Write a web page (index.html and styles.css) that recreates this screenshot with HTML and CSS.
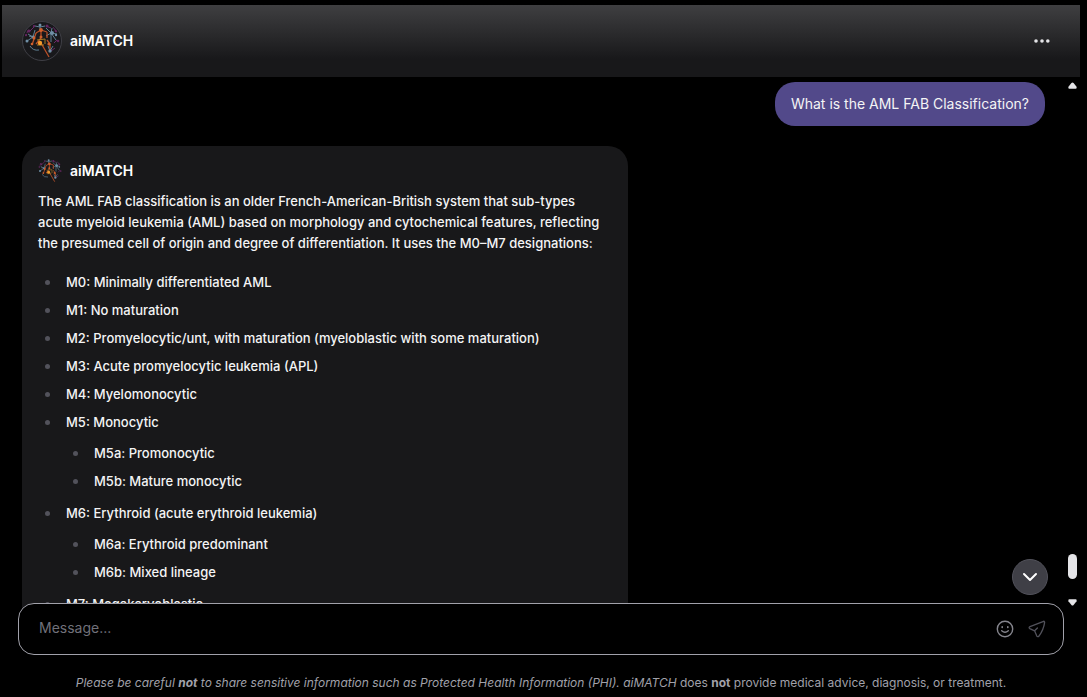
FILE: index.html
```
<!DOCTYPE html>
<html lang="en">
<head>
    <meta charset="UTF-8">
    <meta name="viewport" content="width=device-width, initial-scale=1.0">
    <title>aiMATCH</title>
    <link rel="stylesheet" href="styles.css">
</head>
<body>
    <!-- Logo shared by the header and the messages -->
    <svg class="sprite" aria-hidden="true">
        <symbol id="logo" viewBox="2 3 36 36">
            <g fill="none" stroke="#5f7f94" stroke-width="1">
                <path d="M18 10V5M18 7l-5-1M18 7l5-1M11 17L6 14M11 17l-6 4M11 17l2-7M11 17l-4-1M29 13l-5-5M29 13l6 1M29 13l5 7M29 13l-5 3M29 13l1-5M29 13v9M8 26q3 5 9 4M28 31l-2-5M28 31l3-5"/>
            </g>
            <g fill="none" stroke="#6a2a68" stroke-width="1">
                <path d="M8 11l4-4M24 6l5 2M31 7l3 4M35 20l-3 3M6 9l-1 4M33 28l-4 3"/>
            </g>
            <g fill="none" stroke="#b84f28" stroke-width="1.3">
                <path d="M19 10v8M19 10l-5 3M19 10l6 2M14 13l-2 6M12 19l-2 6M19 18l-5 6M25 12v6M28 24v6M28 24l-3-4M19 23l8 14"/>
            </g>
            <path d="M15 20l8-1M23 19v5M15 25h7" fill="none" stroke="#a87c26"/>
            <g fill="#6f8fa6">
                <circle cx="18" cy="5" r="1.5"/><circle cx="11" cy="17" r="1.5"/><circle cx="5" cy="21" r="1.5"/>
                <circle cx="30" cy="13" r="2"/><circle cx="34" cy="15" r="1.2"/><circle cx="28" cy="31" r="1.7"/>
            </g>
            <g fill="#64265f">
                <circle cx="7" cy="11" r="1.5"/><circle cx="25" cy="6" r="1.5"/><circle cx="34" cy="11" r="1.4"/>
                <circle cx="36" cy="21" r="1.3"/><circle cx="4" cy="15" r="1.2"/><circle cx="12" cy="6" r="1.2"/>
            </g>
            <g fill="#d0602c">
                <circle cx="19" cy="10" r="1.9"/><circle cx="12" cy="18" r="1.5"/><circle cx="19" cy="17" r="1.5"/>
                <circle cx="27" cy="24" r="1.6"/><circle cx="10" cy="24" r="1.3"/>
            </g>
            <circle cx="18" cy="23" r="2.2" fill="#f59a2a"/>
        </symbol>
    </svg>

    <div class="app">
        <header class="header">
            <svg class="avatar" aria-hidden="true"><use href="#logo"/></svg>
            <h1 class="name">aiMATCH</h1>
            <button class="icon-button menu" aria-label="Menu">
                <svg width="20" height="20" viewBox="0 0 20 20" fill="currentColor">
                    <circle cx="4" cy="10" r="1.8"/><circle cx="10" cy="10" r="1.8"/><circle cx="15.800" cy="10" r="1.8"/>
                </svg>
            </button>
        </header>

        <main class="chat">
            <div class="messages">
                <div class="message-user">What is the AML FAB Classification?</div>

                <article class="message-bot">
                    <div class="author">
                        <svg class="avatar-small" aria-hidden="true"><use href="#logo"/></svg>
                        <span class="name">aiMATCH</span>
                    </div>
                    <p>The AML FAB classification is an older French-American-British system that sub-types acute myeloid leukemia (AML) based on morphology and cytochemical features, reflecting the presumed cell of origin and degree of differentiation. It uses the M0–M7 designations:</p>
                    <ul>
                        <li>M0: Minimally differentiated AML</li>
                        <li>M1: No maturation</li>
                        <li>M2: Promyelocytic/unt, with maturation (myeloblastic with some maturation)</li>
                        <li>M3: Acute promyelocytic leukemia (APL)</li>
                        <li>M4: Myelomonocytic</li>
                        <li>M5: Monocytic
                            <ul>
                                <li>M5a: Promonocytic</li>
                                <li>M5b: Mature monocytic</li>
                            </ul>
                        </li>
                        <li>M6: Erythroid (acute erythroid leukemia)
                            <ul>
                                <li>M6a: Erythroid predominant</li>
                                <li>M6b: Mixed lineage</li>
                            </ul>
                        </li>
                        <li>M7: Megakaryoblastic</li>
                    </ul>
                </article>
            </div>

            <div class="scrollbar" aria-hidden="true">
                <svg width="9" height="7" viewBox="0 0 10 7"><path d="M3.8.7Q5-.6 6.2.7L9.5 5Q10 7 8.500 7h-7Q0 7 .5 5z"/></svg>
                <span class="thumb"></span>
                <svg width="9" height="7" viewBox="0 0 10 7"><path d="M3.800 6.300Q5 7.600 6.200 6.300L9.500 2Q10 0 8.500 0h-7Q0 0 .5 2z"/></svg>
            </div>

            <button class="scroll-down" aria-label="Scroll to bottom">
                <svg width="16" height="16" viewBox="0 0 16 16" fill="none" stroke="currentColor" stroke-width="2" stroke-linecap="round" stroke-linejoin="round">
                    <path d="M2 5l6 6 6-6"/>
                </svg>
            </button>
        </main>

        <form class="composer">
            <input type="text" class="composer-input" placeholder="Message..." aria-label="Message">
            <button type="button" class="icon-button emoji" aria-label="Emoji">
                <svg width="20" height="20" viewBox="0 0 20 20" fill="none" stroke="currentColor" stroke-width="1.4" stroke-linecap="round">
                    <circle cx="10" cy="10" r="7.700"/>
                    <path d="M7.200 7.800v.7M12.800 7.800v.7" stroke-width="1.600"/>
                    <path d="M6.700 11.800q3.300 2.800 6.600 0"/>
                </svg>
            </button>
            <button type="submit" class="icon-button send" aria-label="Send">
                <svg width="20" height="20" viewBox="0 0 20 20" fill="none" stroke="currentColor" stroke-width="1.300" stroke-linecap="round" stroke-linejoin="round">
                    <path d="M16.600 2.300L3 7.600Q1.300 8.600 2.800 9.600L7.600 11.800 9.700 16.800Q10.700 18.400 12 17Q16.500 11 17.600 3.600Q17.600 2.100 16.600 2.300zM7.600 11.800L10.400 9"/>
                </svg>
            </button>
        </form>

        <footer class="notice"><em>Please be careful <strong>not</strong> to share sensitive information such as Protected Health Information (PHI). aiMATCH</em> does <strong>not</strong> provide medical advice, diagnosis, or treatment.</footer>
    </div>
</body>
</html>
```

FILE: styles.css
```
* {
    box-sizing: border-box;
}

body {
    margin: 0;
    background: #000;
    color: #f4f4f5;
    font-family: Inter, "Liberation Sans", sans-serif;
    font-size: 14px;
    line-height: 21px;
}

.sprite {
    position: absolute;
    width: 0;
    height: 0;
}

.app {
    display: flex;
    flex-direction: column;
    height: 100vh;
    padding: 5px 7px 4px 2px;
}

/* Header */
.header {
    display: flex;
    flex-shrink: 0;
    align-items: center;
    gap: 8px;
    height: 72px;
    padding: 0 28px 0 20px;
    background: linear-gradient(#3f3f41, #18181a 75%);
}

.avatar {
    width: 40px;
    height: 40px;
    padding: 1px;
    border: 1px solid #3f3f46;
    border-radius: 50%;
    background: #18181b;
}

.name {
    margin: 0;
    color: #fff;
    font-size: 14px;
    font-weight: 600;
    line-height: 22px;
}

.icon-button {
    display: flex;
    padding: 0;
    border: none;
    background: none;
    cursor: pointer;
}

.menu {
    margin-left: auto;
    color: #e4e4e7;
}

/* Conversation */
.chat {
    position: relative;
    display: flex;
    flex: 1;
    min-height: 0;
    overflow: hidden;
}

.messages {
    display: flex;
    flex: 1;
    flex-direction: column;
    gap: 20px;
    padding: 5px 20px 0;
}

.message-user {
    align-self: flex-end;
    flex-shrink: 0;
    padding: 11px 16px 12px;
    border-radius: 20px;
    background: #52498a;
}

.message-bot {
    align-self: flex-start;
    flex-shrink: 0;
    max-width: 606px;
    padding: 13px 16px;
    border-radius: 20px;
    background: #18181a;
    font-size: 13px;
    font-weight: 500;
}

.author {
    display: flex;
    align-items: center;
    gap: 8px;
    margin-bottom: 8px;
}

.avatar-small {
    width: 24px;
    height: 24px;
}

.message-bot p {
    margin: 0 0 16px;
}

.message-bot ul {
    margin: 0;
    padding: 0;
    list-style: none;
    line-height: 24px;
}

.message-bot li {
    position: relative;
    padding-left: 28px;
}

.message-bot li + li {
    margin-top: 4px;
}

.message-bot li::before {
    content: "";
    position: absolute;
    top: 10px;
    left: 7px;
    width: 5px;
    height: 5px;
    border-radius: 50%;
    background: #52525b;
}

.message-bot li ul {
    margin: 7px 0 8px;
}

.scrollbar {
    display: flex;
    flex-direction: column;
    align-items: center;
    width: 15px;
    padding: 5px 0 3px;
    fill: #e4e4e7;
}

.thumb {
    width: 9px;
    height: 25px;
    margin: auto 0 20px;
    border-radius: 5px;
    background: #e4e4e7;
}

.scroll-down {
    position: absolute;
    right: 32px;
    bottom: 14px;
    display: flex;
    align-items: center;
    justify-content: center;
    width: 36px;
    height: 36px;
    padding: 0;
    border: 1px solid #52525b;
    border-radius: 50%;
    background: #3f3f46;
    color: #fff;
    cursor: pointer;
}

/* Message box */
.composer {
    z-index: 1;
    display: flex;
    flex-shrink: 0;
    align-items: center;
    gap: 12px;
    height: 52px;
    margin: -6px 16px 18px;
    padding: 0 16px 0 20px;
    border: 1px solid #a1a1aa;
    border-radius: 16px;
    background: #000;
}

.composer-input {
    flex: 1;
    min-width: 0;
    padding: 0 0 3px;
    border: none;
    outline: none;
    background: none;
    color: #f4f4f5;
    font: inherit;
}

.composer-input::placeholder {
    color: #71717a;
}

.emoji {
    color: #85858d;
}

.send {
    color: #52525b;
}

.notice {
    flex-shrink: 0;
    color: #a1a1aa;
    font-size: 12px;
    line-height: 20px;
    text-align: center;
}
```
